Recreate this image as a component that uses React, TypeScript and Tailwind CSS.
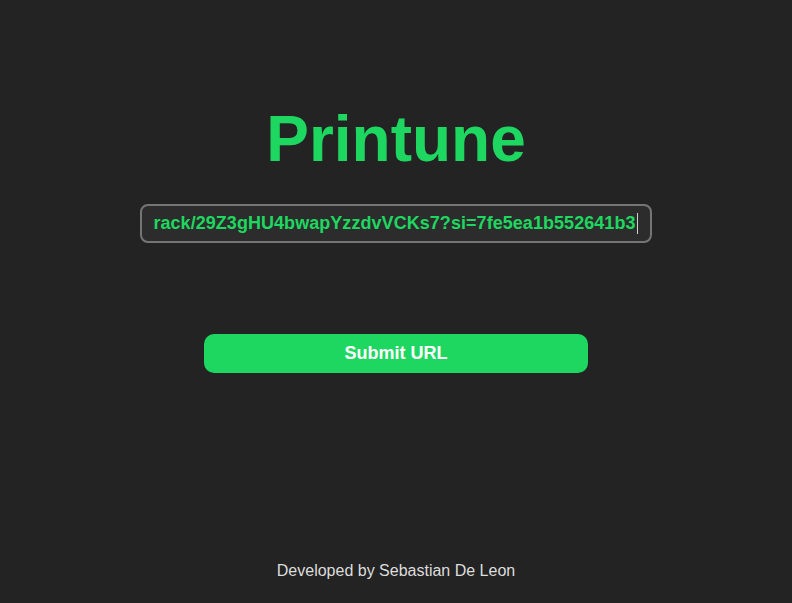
import React from 'react';

const url = 'https://open.spotify.com/track/29Z3gHU4bwapYzzdvVCKs7?si=7fe5ea1b552641b3';

export default function App() {
  return (
    <div
      className="h-screen w-full bg-[#232323] flex flex-col items-center"
      style={{ fontFamily: '"Liberation Sans", Arial, sans-serif' }}
    >
      <h1 className="mt-[107px] text-[64px] leading-none font-bold text-[#1ed760]">Printune</h1>

      {/* url field, scrolled to the end with the caret showing */}
      <div className="mt-[33px] w-[512px] h-[39px] rounded-lg border-2 border-[#757575] bg-[#2c2c2c] pl-[11px] pr-3 flex items-center justify-end overflow-hidden">
        <div className="flex items-center justify-end overflow-hidden whitespace-nowrap">
          <span className="text-[18px] font-bold text-[#1ed760] tracking-[0.05px]">{url}</span>
          <span className="ml-[1px] w-[1.5px] h-[21px] bg-[#cfcfcf] shrink-0" />
        </div>
      </div>

      <button className="mt-[91px] w-[384px] h-[39px] rounded-[10px] bg-[#1ed760] text-white text-[18px] font-bold">
        Submit URL
      </button>

      <footer className="mt-auto mb-[20px] text-[16px] text-[#dddddd]">
        Developed by Sebastian De Leon
      </footer>
    </div>
  );
}
